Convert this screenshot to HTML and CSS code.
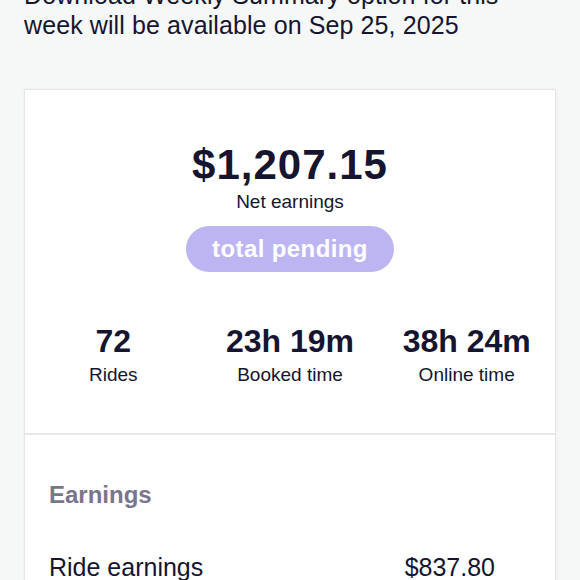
FILE: index.html
```html
<!DOCTYPE html>
<html lang="en">
<head>
    <meta charset="UTF-8">
    <meta name="viewport" content="width=device-width, initial-scale=1.0">
    <title>Weekly earnings</title>
    <link rel="stylesheet" href="styles.css">
</head>
<body>
    <div class="page">
        <p class="notice">Download Weekly Summary option for this week will be available on Sep 25, 2025</p>

        <div class="card">
            <div class="summary">
                <div class="amount">$1,207.15</div>
                <div class="amount-label">Net earnings</div>
                <span class="pill">total pending</span>

                <div class="stats">
                    <div class="stat">
                        <div class="stat-value">72</div>
                        <div class="stat-label">Rides</div>
                    </div>
                    <div class="stat">
                        <div class="stat-value">23h 19m</div>
                        <div class="stat-label">Booked time</div>
                    </div>
                    <div class="stat">
                        <div class="stat-value">38h 24m</div>
                        <div class="stat-label">Online time</div>
                    </div>
                </div>
            </div>

            <div class="breakdown">
                <h3>Earnings</h3>
                <div class="row">
                    <span>Ride earnings</span>
                    <span class="row-value">$837.80</span>
                </div>
            </div>
        </div>
    </div>
</body>
</html>
```

FILE: styles.css
```css
* {
    box-sizing: border-box;
    margin: 0;
    padding: 0;
}

body {
    font-family: 'Liberation Sans', Arial, sans-serif;
    background-color: #f6f7f7;
    color: #15152f;
    overflow: hidden;
}

.page {
    padding: 0 24px;
}

.notice {
    margin-top: -20px;
    font-size: 25px;
    line-height: 30px;
    letter-spacing: 0.1px;
}

.card {
    margin-top: 49px;
    background-color: #fff;
    border: 1px solid #e6e6e8;
    box-shadow: 0 0 3px rgba(0, 0, 0, 0.06);
}

.summary {
    padding: 51px 0 46px;
    display: flex;
    flex-direction: column;
    align-items: center;
}

.amount {
    font-size: 42px;
    line-height: 48px;
    font-weight: 700;
    letter-spacing: 1px;
}

.amount-label {
    font-size: 19px;
    line-height: 24px;
    margin-top: 1px;
}

.pill {
    margin-top: 12px;
    height: 46px;
    padding: 0 26px;
    border-radius: 23px;
    background-color: #bdb5f1;
    color: #fff;
    font-size: 24px;
    font-weight: 700;
    letter-spacing: 0.4px;
    display: flex;
    align-items: center;
}

.stats {
    margin-top: 50px;
    width: 100%;
    display: grid;
    grid-template-columns: repeat(3, 1fr);
}

.stat {
    text-align: center;
}

.stat-value {
    font-size: 32px;
    line-height: 38px;
    font-weight: 700;
}

.stat-label {
    font-size: 19px;
    line-height: 24px;
    margin-top: 3px;
}

.breakdown {
    border-top: 2px solid #e8e8ea;
    padding: 46px 60px 0 24px;
}

.breakdown h3 {
    font-size: 24px;
    line-height: 28px;
    font-weight: 700;
    color: #77768c;
}

.row {
    margin-top: 43px;
    display: flex;
    justify-content: space-between;
    font-size: 25px;
    line-height: 30px;
}
```
